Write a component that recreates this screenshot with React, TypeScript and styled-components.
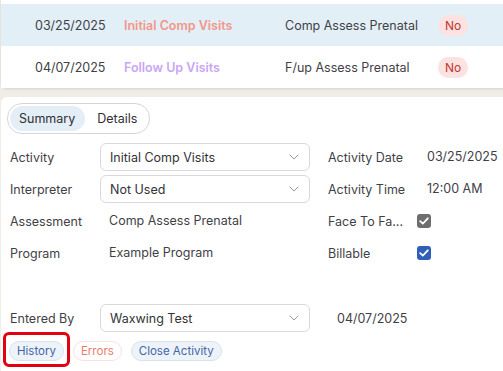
import React from "react";
import styled, { createGlobalStyle } from "styled-components";

const GlobalStyle = createGlobalStyle`
  html, body {
    margin: 0;
    padding: 0;
    background: #efeee6;
    overflow: hidden;
  }
  body {
    font-family: Inter, "Noto Sans", sans-serif;
    color: #3f3f46;
  }
`;

const Page = styled.div`
  width: 503px;
  height: 371px;
  padding-left: 1px;
  box-sizing: border-box;
  display: flex;
  flex-direction: column;
  gap: 9px;
  overflow: hidden;
`;

const ListCard = styled.div`
  background: #fff;
  padding-top: 4px;
  border-radius: 0 0 6px 6px;
  box-shadow: 0 1px 3px rgba(0, 0, 0, 0.12);
  width: 520px;
`;

const VisitRow = styled.div<{ $selected?: boolean }>`
  display: grid;
  grid-template-columns: 89px 161px 153px auto;
  align-items: center;
  height: 42px;
  padding-left: 34px;
  background: ${(p) => (p.$selected ? "#e3eff6" : "#fff")};
  font-size: 12.5px;
`;

const VisitType = styled.span<{ $tone: string }>`
  color: ${(p) => p.$tone};
  font-weight: 600;
`;

const NoPill = styled.span`
  justify-self: start;
  background: #fde2e2;
  color: #c2362b;
  font-size: 12px;
  padding: 3px 7px;
  border-radius: 10px;
`;

const DetailCard = styled.div`
  background: #fff;
  border-radius: 6px 6px 0 0;
  flex: 1;
  padding: 6px 0 0 6px;
  width: 520px;
  display: flex;
  flex-direction: column;
`;

const Tabs = styled.div`
  display: inline-flex;
  align-self: flex-start;
  align-items: center;
  border: 1px solid #d6d6d6;
  border-radius: 15px;
  padding: 2px;
  gap: 3px;
`;

const Tab = styled.span<{ $active?: boolean }>`
  font-size: 12.5px;
  padding: 5px 10px 5px 9px;
  border-radius: 13px;
  background: ${(p) => (p.$active ? "#e3eef6" : "transparent")};
  color: #2f2f35;
`;

const FormGrid = styled.div`
  display: grid;
  grid-template-columns: 90px 210px 108px auto;
  row-gap: 4px;
  margin-top: 9px;
  padding-left: 3px;
  align-items: center;
  font-size: 12.5px;
`;

const Label = styled.span<{ $gap?: number }>`
  color: #3f3f46;
  padding-left: ${(p) => p.$gap ?? 0}px;
  white-space: nowrap;
`;

const Value = styled.span`
  color: #3f3f46;
  padding-left: 9px;
  height: 28px;
  line-height: 28px;
`;

const Select = styled.div`
  width: 210px;
  height: 28px;
  box-sizing: border-box;
  border: 1px solid #d9d9d9;
  border-radius: 6px;
  display: flex;
  align-items: center;
  justify-content: space-between;
  padding: 0 10px 0 9px;
  color: #333;
  font-size: 12.5px;
`;

const Check = styled.span<{ $color: string }>`
  width: 14px;
  height: 14px;
  border-radius: 3px;
  background: ${(p) => p.$color};
  display: inline-flex;
  align-items: center;
  justify-content: center;
  margin-left: -1px;
`;

const Spacer = styled.div`
  height: 37px;
`;

const EnteredRow = styled.div`
  display: flex;
  align-items: center;
  padding-left: 3px;
  font-size: 12.5px;
`;

const EnteredLabel = styled.span`
  width: 90px;
`;

const EnteredDate = styled.span`
  margin-left: 27px;
`;

const ButtonRow = styled.div`
  display: flex;
  align-items: center;
  gap: 9px;
  margin-top: 9px;
  padding-left: 2px;
`;

const Highlight = styled.span`
  position: relative;
  display: inline-flex;
  &::after {
    content: "";
    position: absolute;
    left: -6px;
    right: -6px;
    top: -9px;
    bottom: -6px;
    border: 3px solid #e3000f;
    border-radius: 6px;
    pointer-events: none;
  }
`;

const Pill = styled.button<{ $tone: "blue" | "red" }>`
  font-family: inherit;
  font-size: 11.5px;
  height: 20px;
  padding: 0 7px;
  border-radius: 10px;
  border: 1px solid ${(p) => (p.$tone === "blue" ? "#d6e4ef" : "#fbe1de")};
  background: ${(p) => (p.$tone === "blue" ? "#edf3f9" : "#fff")};
  color: ${(p) => (p.$tone === "blue" ? "#4265a6" : "#ee7a6c")};
`;

const Chevron = () => (
  <svg width="10" height="6" viewBox="0 0 10 6" fill="none">
    <path d="M1 1l4 4 4-4" stroke="#9a9a9a" strokeWidth="1" strokeLinecap="round" strokeLinejoin="round" />
  </svg>
);

const Tick = () => (
  <svg width="10" height="8" viewBox="0 0 10 8" fill="none">
    <path d="M1.2 4.2l2.6 2.4L8.8 1.3" stroke="#fff" strokeWidth="1.8" strokeLinecap="round" strokeLinejoin="round" />
  </svg>
);

const visits = [
  { date: "03/25/2025", type: "Initial Comp Visits", tone: "#f3958a", assess: "Comp Assess Prenatal", selected: true },
  { date: "04/07/2025", type: "Follow Up Visits", tone: "#c9a5f6", assess: "F/up Assess Prenatal", selected: false },
];

const App = () => {
  return (
    <>
      <GlobalStyle />
      <Page>
        <ListCard>
          {visits.map((v) => (
            <VisitRow key={v.date} $selected={v.selected}>
              <span>{v.date}</span>
              <VisitType $tone={v.tone}>{v.type}</VisitType>
              <span>{v.assess}</span>
              <NoPill>No</NoPill>
            </VisitRow>
          ))}
        </ListCard>
        <DetailCard>
          <Tabs>
            <Tab $active>Summary</Tab>
            <Tab>Details</Tab>
          </Tabs>
          <FormGrid>
            <Label>Activity</Label>
            <Select>
              Initial Comp Visits
              <Chevron />
            </Select>
            <Label $gap={18}>Activity Date</Label>
            <Value>03/25/2025</Value>

            <Label>Interpreter</Label>
            <Select>
              Not Used
              <Chevron />
            </Select>
            <Label $gap={18}>Activity Time</Label>
            <Value>12:00 AM</Value>

            <Label>Assessment</Label>
            <Value>Comp Assess Prenatal</Value>
            <Label $gap={18}>Face To Fa...</Label>
            <Check $color="#6e6e6e">
              <Tick />
            </Check>

            <Label>Program</Label>
            <Value>Example Program</Value>
            <Label $gap={18}>Billable</Label>
            <Check $color="#2f5fb7">
              <Tick />
            </Check>
          </FormGrid>
          <Spacer />
          <EnteredRow>
            <EnteredLabel>Entered By</EnteredLabel>
            <Select>
              Waxwing Test
              <Chevron />
            </Select>
            <EnteredDate>04/07/2025</EnteredDate>
          </EnteredRow>
          <ButtonRow>
            <Highlight>
              <Pill $tone="blue">History</Pill>
            </Highlight>
            <Pill $tone="red">Errors</Pill>
            <Pill $tone="blue">Close Activity</Pill>
          </ButtonRow>
        </DetailCard>
      </Page>
    </>
  );
};

export default App;
